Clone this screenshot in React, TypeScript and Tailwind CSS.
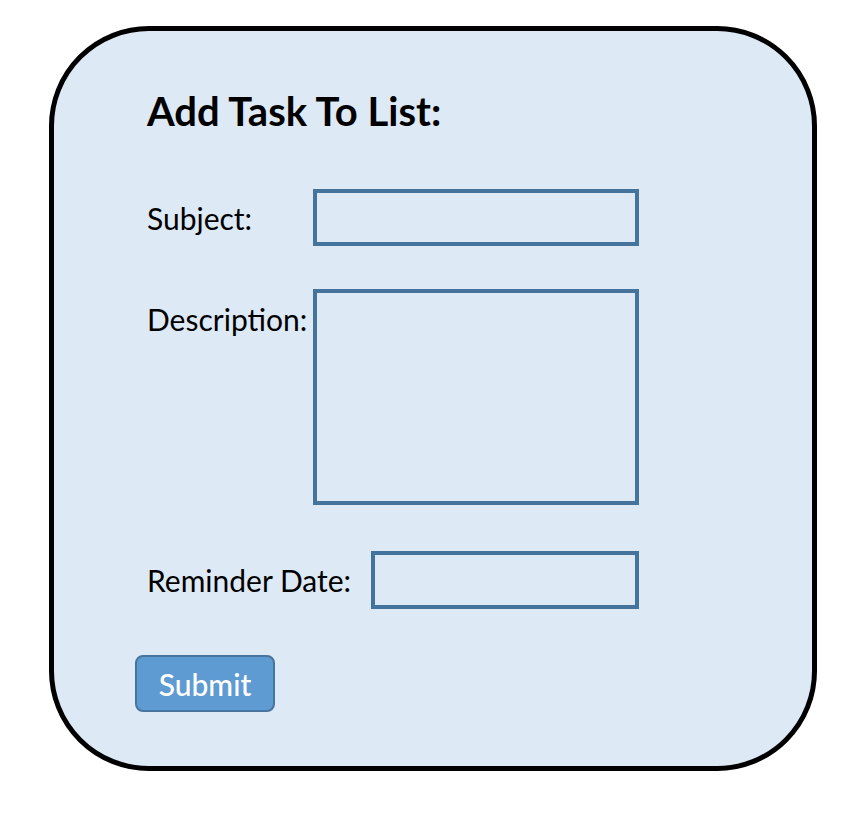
import React from "react";

export default function App() {
    return (
        <div className="min-h-screen w-full bg-white pl-[49px] pt-[26px] font-['Lato',sans-serif]">
            <div className="flex h-[745px] w-[768px] flex-col rounded-[100px] border-[5px] border-black bg-[#dde9f5] pl-[93px] pt-[57px]">
                <h1 className="h-[46px] text-[40px] font-bold leading-[46px] text-black">Add Task To List:</h1>

                <div className="mt-[55px] flex items-center">
                    <label className="w-[166px] text-[30px] leading-[34px] text-black">Subject:</label>
                    <input type="text" className="h-[57px] w-[326px] border-4 border-[#44739c] bg-transparent outline-none" />
                </div>

                <div className="mt-[43px] flex items-start">
                    <label className="w-[166px] pt-[13px] text-[30px] leading-[34px] text-black">Description:</label>
                    <textarea className="h-[216px] w-[326px] resize-none border-4 border-[#44739c] bg-transparent outline-none" />
                </div>

                <div className="mt-[46px] flex items-center">
                    <label className="w-[224px] text-[30px] leading-[34px] text-black">Reminder Date:</label>
                    <input type="text" className="h-[58px] w-[268px] border-4 border-[#44739c] bg-transparent outline-none" />
                </div>

                <button type="button" className="-ml-[12px] mt-[46px] h-[57px] w-[140px] rounded-[8px] border-2 border-[#48749e] bg-[#5f9bd3] text-[30px] font-medium leading-none text-white">
                    Submit
                </button>
            </div>
        </div>
    );
}
